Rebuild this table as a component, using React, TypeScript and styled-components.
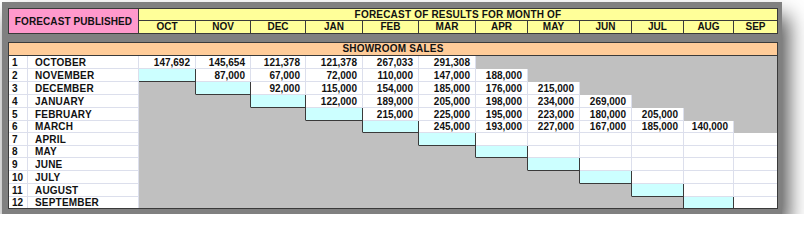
import React from "react";
import styled, { createGlobalStyle } from "styled-components";

const GlobalStyle = createGlobalStyle`
  html, body { margin: 0; padding: 0; background: #ffffff; }
  body { font-family: "Liberation Sans", Arial, sans-serif; }
`;

const DARK = "#3a3a3a";
const LIGHT = "#dcdfec";
const GRAY = "#c0c0c0";

const COLS = [57, 55, 55, 57, 56, 57, 52, 52, 52, 52, 50, 43];
const ROW_H = [13, 13, 13, 13, 13, 12, 13, 12, 13, 13, 13, 11];
const MONTHS = ["OCT", "NOV", "DEC", "JAN", "FEB", "MAR", "APR", "MAY", "JUN", "JUL", "AUG", "SEP"];
const NAMES = [
  "OCTOBER", "NOVEMBER", "DECEMBER", "JANUARY", "FEBRUARY", "MARCH",
  "APRIL", "MAY", "JUNE", "JULY", "AUGUST", "SEPTEMBER",
];
const VALUES: string[][] = [
  ["147,692", "145,654", "121,378", "121,378", "267,033", "291,308"],
  ["87,000", "67,000", "72,000", "110,000", "147,000", "188,000"],
  ["92,000", "115,000", "154,000", "185,000", "176,000", "215,000"],
  ["122,000", "189,000", "205,000", "198,000", "234,000", "269,000"],
  ["215,000", "225,000", "195,000", "223,000", "180,000", "205,000"],
  ["245,000", "193,000", "227,000", "167,000", "185,000", "140,000"],
];

const Panel = styled.div`
  margin: 2px 0 0 2px;
  width: 780px;
  box-sizing: border-box;
  padding: 6px 4px 5px 6px;
  background: #808080;
  box-shadow: 6px 14px 20px rgba(0, 0, 0, 0.7);
  display: flex;
  flex-direction: column;
  gap: 8px;
`;

const HeaderGrid = styled.div`
  display: grid;
  grid-template-columns: 130px ${COLS.map((c) => c + "px").join(" ")};
  grid-template-rows: 12px 12px;
  border: 1px solid ${DARK};
  width: max-content;
`;

const Text = `
  font-family: "Liberation Sans", Arial, sans-serif;
  font-weight: bold;
  font-size: 10px;
  color: #111;
  white-space: nowrap;
  box-sizing: border-box;
  overflow: hidden;
`;

const PublishedCell = styled.div`
  ${Text}
  grid-row: 1 / span 2;
  background: #ff99cc;
  border-right: 1px solid ${DARK};
  display: flex;
  align-items: center;
  justify-content: center;
  letter-spacing: 0.1px;
`;

const TitleCell = styled.div`
  ${Text}
  grid-column: 2 / span 12;
  background: #ffff99;
  border-bottom: 1px solid ${DARK};
  display: flex;
  align-items: center;
  justify-content: center;
  line-height: 11px;
  letter-spacing: 0.2px;
`;

const MonthCell = styled.div<{ $last?: boolean }>`
  ${Text}
  background: #ffff99;
  border-right: ${(p) => (p.$last ? "none" : `1px solid ${DARK}`)};
  display: flex;
  align-items: center;
  justify-content: center;
  line-height: 12px;
`;

const Table = styled.div`
  display: grid;
  grid-template-columns: 19px 111px ${COLS.map((c) => c + "px").join(" ")};
  grid-template-rows: 13px ${ROW_H.map((h) => h + "px").join(" ")};
  border: 1px solid ${DARK};
  width: max-content;
  background: ${GRAY};
`;

const SectionHeader = styled.div`
  ${Text}
  grid-column: 1 / span 14;
  background: #ffcc99;
  border-bottom: 1px solid ${DARK};
  display: flex;
  align-items: center;
  justify-content: center;
  line-height: 12px;
  letter-spacing: 0.2px;
`;

const IndexCell = styled.div<{ $last?: boolean }>`
  ${Text}
  background: #fff;
  border-right: 1px solid ${LIGHT};
  border-bottom: ${(p) => (p.$last ? "none" : `1px solid ${LIGHT}`)};
  padding-left: 3px;
  display: flex;
  align-items: center;
  line-height: 11px;
`;

const NameCell = styled.div<{ $last?: boolean }>`
  ${Text}
  background: #fff;
  border-right: 1px solid ${LIGHT};
  border-bottom: ${(p) => (p.$last ? "none" : `1px solid ${LIGHT}`)};
  padding-left: 7px;
  display: flex;
  align-items: center;
  line-height: 11px;
  letter-spacing: 0.2px;
`;

type Kind = "gray" | "cyan" | "white";

const DataCell = styled.div<{ $kind: Kind; $right: string; $bottom: string }>`
  ${Text}
  background: ${(p) => (p.$kind === "gray" ? GRAY : p.$kind === "cyan" ? "#ccffff" : "#ffffff")};
  border-right: ${(p) => p.$right};
  border-bottom: ${(p) => p.$bottom};
  display: flex;
  align-items: center;
  justify-content: flex-end;
  padding-right: 5px;
  line-height: 11px;
`;

function kindAt(r: number, c: number): Kind {
  if (c === r - 1) return "cyan";
  if (c < r - 1) return "gray";
  if (r <= 5 && c > r + 5) return "gray";
  return "white";
}

function cellFor(r: number, c: number) {
  const lastRow = r === 11;
  const lastCol = c === 11;
  const kind = kindAt(r, c);
  const value = kind === "white" && r <= 5 ? VALUES[r][c - r] : "";

  let right: string;
  if (lastCol) right = "none";
  else if (kind === "cyan" || c === r - 2) right = `1px solid ${DARK}`;
  else if (kind === "gray") right = kindAt(r, c + 1) === "gray" ? `1px solid ${GRAY}` : `1px solid ${LIGHT}`;
  else right = `1px solid ${LIGHT}`;

  let bottom: string;
  if (lastRow) bottom = "none";
  else if (kind === "cyan") bottom = `1px solid ${DARK}`;
  else if (kind === "gray") bottom = `1px solid ${GRAY}`;
  else bottom = `1px solid ${LIGHT}`;

  return { kind, value, right, bottom };
}

export default function App() {
  return (
    <>
      <GlobalStyle />
      <Panel>
        <HeaderGrid>
          <PublishedCell>FORECAST PUBLISHED</PublishedCell>
          <TitleCell>FORECAST OF RESULTS FOR MONTH OF</TitleCell>
          {MONTHS.map((m, i) => (
            <MonthCell key={m} $last={i === 11}>
              {m}
            </MonthCell>
          ))}
        </HeaderGrid>
        <Table>
          <SectionHeader>SHOWROOM SALES</SectionHeader>
          {NAMES.map((name, r) => (
            <React.Fragment key={name}>
              <IndexCell $last={r === 11}>{r + 1}</IndexCell>
              <NameCell $last={r === 11}>{name}</NameCell>
              {MONTHS.map((m, c) => {
                const cell = cellFor(r, c);
                return (
                  <DataCell key={m} $kind={cell.kind} $right={cell.right} $bottom={cell.bottom}>
                    {cell.value}
                  </DataCell>
                );
              })}
            </React.Fragment>
          ))}
        </Table>
      </Panel>
    </>
  );
}
